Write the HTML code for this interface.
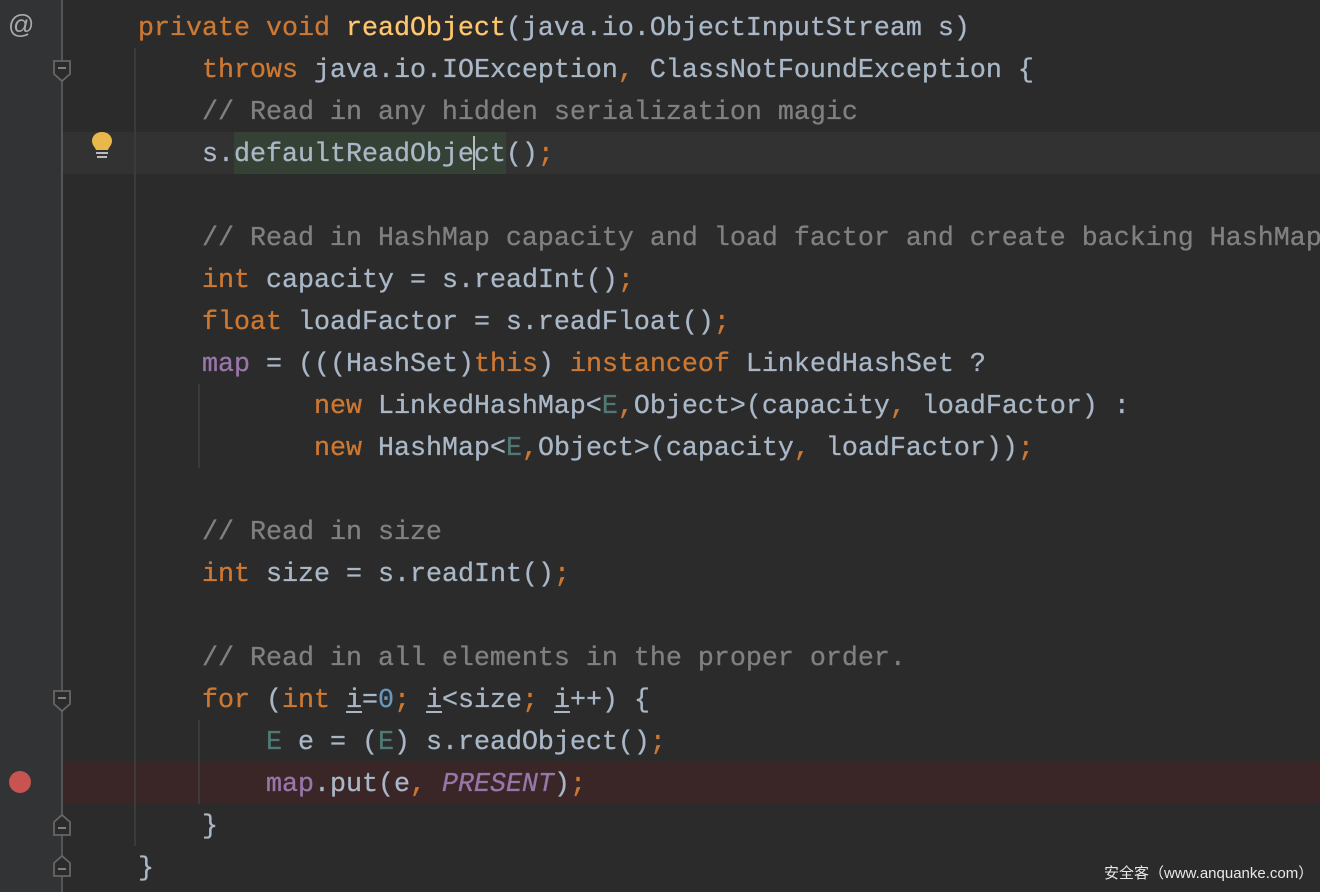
<!DOCTYPE html>
<html><head><meta charset="utf-8"><style>
html,body{margin:0;padding:0}
body{width:1320px;height:892px;background:#2b2b2b;position:relative;overflow:hidden;font-family:"Liberation Mono","DejaVu Sans Mono",monospace;font-size:26.67px;color:#a9b7c6}
.g{position:absolute;left:0;top:0;width:62px;height:892px;background:#313335}
.gl{position:absolute;left:61px;top:0;width:2px;height:892px;background:#555}
.l{position:absolute;left:138px;height:42px;line-height:42px;white-space:pre;margin-top:2px;-webkit-text-stroke:0.3px currentColor}
.k{color:#cc7832}.f{color:#ffc66d}.c{color:#808080}.p{color:#9876aa}.t{color:#507874}.n{color:#6897bb}
.u{text-decoration:underline;text-decoration-color:#a9b7c6;text-underline-offset:4px}
.vg{position:absolute;width:2px;background:#3b3b3b}
.fold{position:absolute;left:52px;width:20px;height:24px}
</style></head><body>
<div class="g"></div>
<div style="position:absolute;left:62px;top:132px;width:1258px;height:42px;background:#323232"></div>
<div style="position:absolute;left:62px;top:762px;width:1258px;height:42px;background:#3a2626"></div>
<div style="position:absolute;left:234px;top:132px;width:272px;height:42px;background:#344134"></div>
<div class="gl"></div>
<div class="vg" style="left:134px;top:48px;height:798px"></div>
<div class="vg" style="left:198px;top:384px;height:84px"></div>
<div class="vg" style="left:198px;top:720px;height:84px"></div>
<div style="position:absolute;left:8px;top:9px;color:#a9a9a9;font-family:'Liberation Sans',sans-serif;font-size:26px">@</div>
<svg class="fold" style="top:59px" viewBox="0 0 20 24"><path d="M2 2H18V15L10 22L2 15Z" fill="#2b2b2b" stroke="#666" stroke-width="1.8"/><path d="M6 9H14" stroke="#888" stroke-width="1.8"/></svg>
<svg class="fold" style="top:689px" viewBox="0 0 20 24"><path d="M2 2H18V15L10 22L2 15Z" fill="#2b2b2b" stroke="#666" stroke-width="1.8"/><path d="M6 9H14" stroke="#888" stroke-width="1.8"/></svg>
<svg class="fold" style="top:813px" viewBox="0 0 20 24"><path d="M2 22H18V9L10 2L2 9Z" fill="#2b2b2b" stroke="#666" stroke-width="1.8"/><path d="M6 15H14" stroke="#888" stroke-width="1.8"/></svg>
<svg class="fold" style="top:854px" viewBox="0 0 20 24"><path d="M2 22H18V9L10 2L2 9Z" fill="#2b2b2b" stroke="#666" stroke-width="1.8"/><path d="M6 15H14" stroke="#888" stroke-width="1.8"/></svg>
<svg style="position:absolute;left:90px;top:131px" width="24" height="30" viewBox="0 0 24 30"><path d="M12 1C6 1 2 5 2 10C2 14 5 16 6 19H18C19 16 22 14 22 10C22 5 18 1 12 1Z" fill="#e9b84a"/><rect x="6" y="21" width="12" height="2" fill="#bbb"/><rect x="7" y="25" width="10" height="2" fill="#bbb"/></svg>
<div style="position:absolute;left:9px;top:771px;width:22px;height:22px;border-radius:50%;background:#c75450"></div>
<div style="position:absolute;left:473px;top:136px;width:2px;height:34px;background:#bbb"></div>

<div class="l" style="top:6px"><span class="k">private void </span><span class="f">readObject</span>(java.io.ObjectInputStream s)</div>
<div class="l" style="top:48px">    <span class="k">throws </span>java.io.IOException<span class="k">, </span>ClassNotFoundException {</div>
<div class="l c" style="top:90px">    // Read in any hidden serialization magic</div>
<div class="l" style="top:132px">    s.defaultReadObject()<span class="k">;</span></div>
<div class="l c" style="top:216px">    // Read in HashMap capacity and load factor and create backing HashMap</div>
<div class="l" style="top:258px">    <span class="k">int </span>capacity = s.readInt()<span class="k">;</span></div>
<div class="l" style="top:300px">    <span class="k">float </span>loadFactor = s.readFloat()<span class="k">;</span></div>
<div class="l" style="top:342px">    <span class="p">map</span> = (((HashSet)<span class="k">this</span>) <span class="k">instanceof </span>LinkedHashSet ?</div>
<div class="l" style="top:384px">           <span class="k">new </span>LinkedHashMap&lt;<span class="t">E</span><span class="k">,</span>Object&gt;(capacity<span class="k">, </span>loadFactor) :</div>
<div class="l" style="top:426px">           <span class="k">new </span>HashMap&lt;<span class="t">E</span><span class="k">,</span>Object&gt;(capacity<span class="k">, </span>loadFactor))<span class="k">;</span></div>
<div class="l c" style="top:510px">    // Read in size</div>
<div class="l" style="top:552px">    <span class="k">int </span>size = s.readInt()<span class="k">;</span></div>
<div class="l c" style="top:636px">    // Read in all elements in the proper order.</div>
<div class="l" style="top:678px">    <span class="k">for </span>(<span class="k">int </span><span class="u">i</span>=<span class="n">0</span><span class="k">; </span><span class="u">i</span>&lt;size<span class="k">; </span><span class="u">i</span>++) {</div>
<div class="l" style="top:720px">        <span class="t">E</span> e = (<span class="t">E</span>) s.readObject()<span class="k">;</span></div>
<div class="l" style="top:762px">        <span class="p">map</span>.put(e<span class="k">, </span><span class="p" style="font-style:italic">PRESENT</span>)<span class="k">;</span></div>
<div class="l" style="top:804px">    }</div>
<div class="l" style="top:846px">}</div>
<div style="position:absolute;left:1104px;top:862px;font-family:'Liberation Sans','Noto Sans CJK SC',sans-serif;font-size:15px;color:#e8e8e8">安全客（www.anquanke.com）</div>
</body></html>
